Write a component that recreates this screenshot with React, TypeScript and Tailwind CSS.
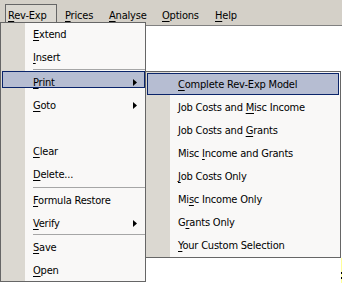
import React from "react";

const FONT = "font-['DejaVu_Sans_Condensed','DejaVu_Sans','Liberation_Sans',sans-serif]";

function Mn({ text, idx }: { text: string; idx: number }) {
  if (idx < 0) return <>{text}</>;
  return (
    <>
      {text.slice(0, idx)}
      <span className="underline decoration-1 underline-offset-[2px]">{text[idx]}</span>
      {text.slice(idx + 1)}
    </>
  );
}

function Arrow() {
  return (
    <svg width="4" height="7" viewBox="0 0 4 7" className="absolute right-[8px] top-[8px]">
      <polygon points="0,0 4,3.5 0,7" fill="#000" />
    </svg>
  );
}

type MainItem =
  | { kind: "item"; text: string; idx: number; h: number; arrow?: boolean; active?: boolean }
  | { kind: "sep"; h: number; line: number }
  | { kind: "empty"; h: number };

const mainItems: MainItem[] = [
  { kind: "item", text: "Extend", idx: 0, h: 23 },
  { kind: "item", text: "Insert", idx: 0, h: 23 },
  { kind: "sep", h: 2, line: 0 },
  { kind: "item", text: "Print", idx: 0, h: 23, arrow: true, active: true },
  { kind: "item", text: "Goto", idx: 0, h: 23, arrow: true },
  { kind: "empty", h: 23 },
  { kind: "item", text: "Clear", idx: 0, h: 23 },
  { kind: "item", text: "Delete...", idx: 0, h: 23 },
  { kind: "sep", h: 3, line: 1 },
  { kind: "item", text: "Formula Restore", idx: 0, h: 23 },
  { kind: "item", text: "Verify", idx: 0, h: 22, arrow: true },
  { kind: "sep", h: 2, line: 0 },
  { kind: "item", text: "Save", idx: 0, h: 23 },
  { kind: "item", text: "Open", idx: 0, h: 22 },
];

const subItems: { text: string; idx: number }[] = [
  { text: "Complete Rev-Exp Model", idx: 0 },
  { text: "Job Costs and Misc Income", idx: 14 },
  { text: "Job Costs and Grants", idx: 14 },
  { text: "Misc Income and Grants", idx: 5 },
  { text: "Job Costs Only", idx: 0 },
  { text: "Misc Income Only", idx: 2 },
  { text: "Grants Only", idx: 1 },
  { text: "Your Custom Selection", idx: 0 },
];

export default function App() {
  return (
    <div
      className={`relative w-[342px] h-[283px] overflow-hidden bg-white text-[11px] text-black tracking-[-0.2px] ${FONT}`}
    >
      {/* menu bar */}
      <div className="flex h-[26px] items-start border-b border-[#808080] bg-[#d4d0c8] leading-[13px]">
        <div className="ml-[5px] mt-[4px] h-[22px] w-[52px] border border-b-0 border-[#666666] bg-[#dbd8d1] pl-[2px] pt-[4px]">
          <Mn text="Rev-Exp" idx={0} />
        </div>
        <div className="ml-[8px] mt-[9px] w-[44px]">
          <Mn text="Prices" idx={0} />
        </div>
        <div className="mt-[9px] w-[53px]">
          <Mn text="Analyse" idx={0} />
        </div>
        <div className="mt-[9px] w-[53px]">
          <Mn text="Options" idx={0} />
        </div>
        <div className="mt-[9px]">
          <Mn text="Help" idx={0} />
        </div>
      </div>

      {/* background cell edge */}
      <div className="absolute right-0 top-[258px] h-[25px] w-[1px] bg-[#ffff99]">
        <div className="mt-[14px] h-[2px] bg-black" />
        <div className="mt-[3px] h-[2px] bg-black" />
      </div>

      {/* main menu */}
      <div className="absolute left-0 top-[22px] flex h-[260px] w-[146px] flex-col border border-[#666666] bg-[linear-gradient(to_right,#dbd8d1_24px,#f9f8f7_24px)]">
        {mainItems.map((it, i) => {
          if (it.kind === "sep") {
            return (
              <div key={i} className="relative shrink-0" style={{ height: it.h }}>
                <div
                  className="absolute left-[32px] right-0 h-[1px] bg-[#a6a6a6]"
                  style={{ top: it.line }}
                />
              </div>
            );
          }
          if (it.kind === "empty") {
            return <div key={i} className="shrink-0" style={{ height: it.h }} />;
          }
          return (
            <div key={i} className="relative shrink-0" style={{ height: it.h }}>
              {it.active && (
                <div className="absolute left-[1px] right-0 top-0 h-[17px] border border-[#0a246a] bg-[#b6bdd2]" />
              )}
              <div className="relative pl-[32px] pt-[5px] leading-[13px]">
                <Mn text={it.text} idx={it.idx} />
              </div>
              {it.arrow && <Arrow />}
            </div>
          );
        })}
      </div>

      {/* submenu */}
      <div className="absolute left-[145px] top-[71px] flex h-[187px] w-[196px] flex-col border border-[#666666] bg-[linear-gradient(to_right,#dbd8d1_24px,#f9f8f7_24px)]">
        {subItems.map((it, i) => (
          <div key={i} className="relative h-[23px] shrink-0">
            {i === 0 && (
              <div className="absolute left-[1px] right-[1px] top-[1px] h-[22px] border border-[#0a246a] bg-[#b6bdd2]" />
            )}
            <div className="relative pl-[32px] pt-[6px] leading-[13px]">
              <Mn text={it.text} idx={it.idx} />
            </div>
          </div>
        ))}
      </div>
    </div>
  );
}
